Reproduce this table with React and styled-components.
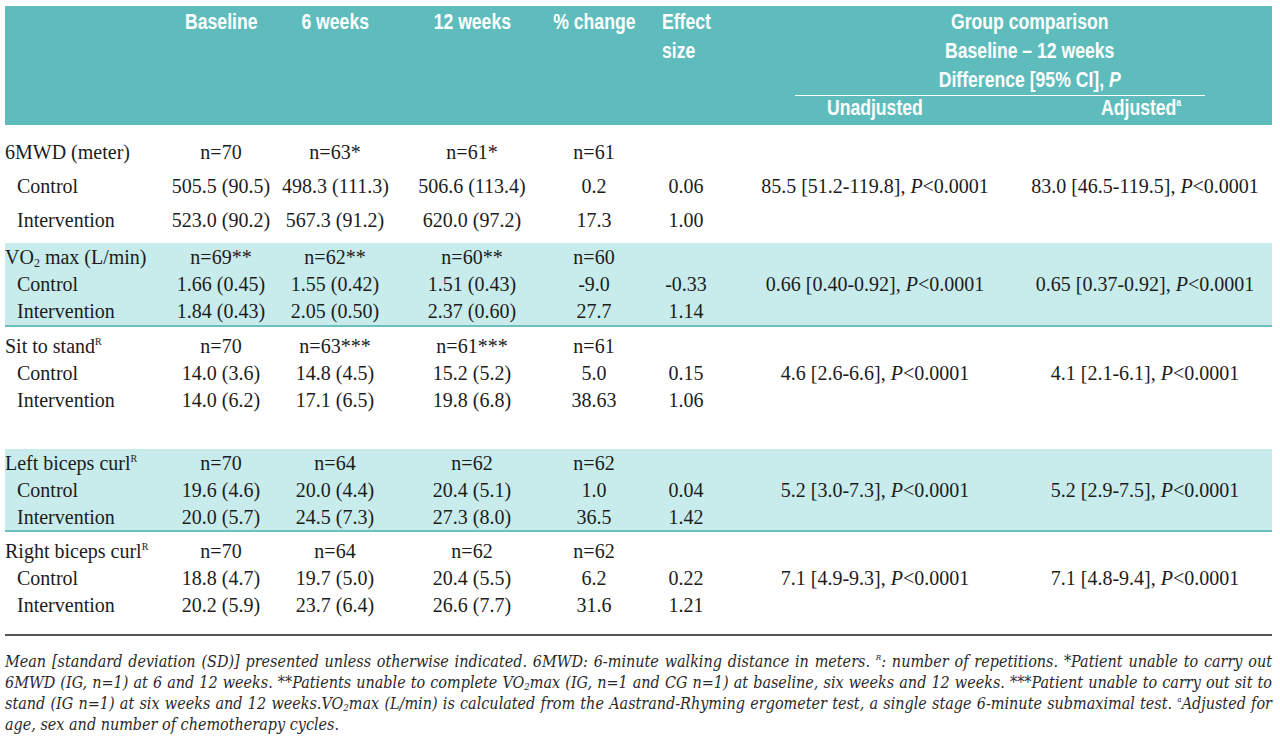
import React from "react";
import styled, { createGlobalStyle } from "styled-components";

const GlobalStyle = createGlobalStyle`
  html, body {
    margin: 0;
    padding: 0;
    background: #ffffff;
  }
  body {
    font-family: "Liberation Serif", "Times New Roman", serif;
    color: #1c1c1c;
  }
`;

const COLS = "155px 122px 106px 168px 76px 108px 270px 262px";

const Page = styled.div`
  width: 1267px;
  padding: 6px 8px 0 5px;
`;

const Head = styled.div`
  display: grid;
  grid-template-columns: ${COLS};
  height: 119px;
  background: #5ebdbc;
  color: #ffffff;
  font-family: "Liberation Sans", Arial, sans-serif;
  font-weight: 700;
  font-size: 22px;
  line-height: 29px;
  white-space: nowrap;
`;

const HeadCell = styled.div`
  display: flex;
  align-items: flex-start;
  justify-content: ${(p) => (p.$left ? "flex-start" : "center")};
  padding-top: 1px;
  padding-left: ${(p) => p.$indent || 0}px;
`;

// the reference uses a condensed grotesque; squeeze Liberation Sans to match
const Narrow = styled.span`
  display: inline-block;
  text-align: ${(p) => (p.$left ? "left" : "center")};
  transform: scaleX(0.8);
  transform-origin: ${(p) => (p.$left ? "left" : "center")} center;
`;

const GroupHead = styled.div`
  grid-column: span 2;
  display: flex;
  flex-direction: column;
`;

const GroupTitle = styled.div`
  padding: 1px 0 0 48px;
  text-align: center;
`;

const Rule = styled.div`
  height: 1px;
  background: #ffffff;
  margin: 1px 67px 0 55px;
`;

const SubHeads = styled.div`
  display: grid;
  grid-template-columns: 270px 262px;
  line-height: 24px;
  text-align: center;
`;

const Section = styled.div`
  display: grid;
  grid-template-columns: ${COLS};
  grid-auto-rows: ${(p) => p.$row}px;
  align-items: center;
  padding: ${(p) => p.$pad};
  background: ${(p) => (p.$shaded ? "#c8ebeb" : "transparent")};
  border-bottom: ${(p) => (p.$shaded ? "2px solid #6cbfbf" : "none")};
  font-size: 20px;
  line-height: 24px;
`;

const Label = styled.div`
  padding-left: ${(p) => (p.$sub ? 12 : 0)}px;
  white-space: nowrap;
`;

const Cell = styled.div`
  text-align: center;
  white-space: nowrap;
  padding-left: ${(p) => p.$shift || 0}px;
`;

const Sup = styled.sup`
  font-size: 0.5em;
  line-height: 0;
  vertical-align: 0.85em;
`;

const Sub = styled.sub`
  font-size: 0.6em;
  line-height: 0;
  vertical-align: -0.25em;
`;

const Notes = styled.div`
  border-top: 2px solid #555555;
  padding-top: 15px;
  font-family: "DejaVu Serif", "Liberation Serif", serif;
  font-stretch: condensed;
  font-style: italic;
  font-size: 16px;
  line-height: 21px;
  color: #2a2a2a;
`;

const NoteLine = styled.div`
  text-align: ${(p) => (p.$last ? "left" : "justify")};
  text-align-last: ${(p) => (p.$last ? "left" : "justify")};
`;

const groups = [
  {
    label: "6MWD (meter)",
    n: ["n=70", "n=63*", "n=61*", "n=61"],
    control: ["505.5 (90.5)", "498.3 (111.3)", "506.6 (113.4)", "0.2", "0.06"],
    intervention: ["523.0 (90.2)", "567.3 (91.2)", "620.0 (97.2)", "17.3", "1.00"],
    unadj: "85.5 [51.2-119.8]",
    adj: "83.0 [46.5-119.5]",
    row: 34,
    pad: "10px 0 6px",
  },
  {
    label: (
      <>
        VO<Sub>2</Sub> max (L/min)
      </>
    ),
    n: ["n=69**", "n=62**", "n=60**", "n=60"],
    control: ["1.66 (0.45)", "1.55 (0.42)", "1.51 (0.43)", "-9.0", "-0.33"],
    intervention: ["1.84 (0.43)", "2.05 (0.50)", "2.37 (0.60)", "27.7", "1.14"],
    unadj: "0.66 [0.40-0.92]",
    adj: "0.65 [0.37-0.92]",
    row: 27,
    pad: "0 0 1px",
    shaded: true,
  },
  {
    label: (
      <>
        Sit to stand<Sup>R</Sup>
      </>
    ),
    n: ["n=70", "n=63***", "n=61***", "n=61"],
    control: ["14.0 (3.6)", "14.8 (4.5)", "15.2 (5.2)", "5.0", "0.15"],
    intervention: ["14.0 (6.2)", "17.1 (6.5)", "19.8 (6.8)", "38.63", "1.06"],
    unadj: "4.6 [2.6-6.6]",
    adj: "4.1 [2.1-6.1]",
    row: 27,
    pad: "5px 0 36px",
  },
  {
    label: (
      <>
        Left biceps curl<Sup>R</Sup>
      </>
    ),
    n: ["n=70", "n=64", "n=62", "n=62"],
    control: ["19.6 (4.6)", "20.0 (4.4)", "20.4 (5.1)", "1.0", "0.04"],
    intervention: ["20.0 (5.7)", "24.5 (7.3)", "27.3 (8.0)", "36.5", "1.42"],
    unadj: "5.2 [3.0-7.3]",
    adj: "5.2 [2.9-7.5]",
    row: 27,
    pad: "0",
    shaded: true,
  },
  {
    label: (
      <>
        Right biceps curl<Sup>R</Sup>
      </>
    ),
    n: ["n=70", "n=64", "n=62", "n=62"],
    control: ["18.8 (4.7)", "19.7 (5.0)", "20.4 (5.5)", "6.2", "0.22"],
    intervention: ["20.2 (5.9)", "23.7 (6.4)", "26.6 (7.7)", "31.6", "1.21"],
    unadj: "7.1 [4.9-9.3]",
    adj: "7.1 [4.8-9.4]",
    row: 27,
    pad: "5px 0 16px",
  },
];

const Compare = ({ value }) => (
  <>
    {value}, <i>P</i>&lt;0.0001
  </>
);

const Group = ({ g }) => (
  <Section $row={g.row} $pad={g.pad} $shaded={g.shaded}>
    <Label>{g.label}</Label>
    {g.n.map((v, i) => (
      <Cell key={i}>{v}</Cell>
    ))}
    <Cell />
    <Cell />
    <Cell />

    <Label $sub>Control</Label>
    {g.control.map((v, i) => (
      <Cell key={i}>{v}</Cell>
    ))}
    <Cell>
      <Compare value={g.unadj} />
    </Cell>
    <Cell $shift={8}>
      <Compare value={g.adj} />
    </Cell>

    <Label $sub>Intervention</Label>
    {g.intervention.map((v, i) => (
      <Cell key={i}>{v}</Cell>
    ))}
    <Cell />
    <Cell />
  </Section>
);

export default function App() {
  return (
    <Page>
      <GlobalStyle />
      <Head>
        <HeadCell />
        <HeadCell>
          <Narrow>Baseline</Narrow>
        </HeadCell>
        <HeadCell>
          <Narrow>6 weeks</Narrow>
        </HeadCell>
        <HeadCell>
          <Narrow>12 weeks</Narrow>
        </HeadCell>
        <HeadCell>
          <Narrow>% change</Narrow>
        </HeadCell>
        <HeadCell $left $indent={30}>
          <Narrow $left>
            Effect
            <br />
            size
          </Narrow>
        </HeadCell>
        <GroupHead>
          <GroupTitle>
            <Narrow>
              Group comparison
              <br />
              Baseline – 12 weeks
              <br />
              Difference [95% CI], <i>P</i>
            </Narrow>
          </GroupTitle>
          <Rule />
          <SubHeads>
            <div>
              <Narrow>Unadjusted</Narrow>
            </div>
            <div>
              <Narrow>
                Adjusted<Sup>a</Sup>
              </Narrow>
            </div>
          </SubHeads>
        </GroupHead>
      </Head>

      {groups.map((g, i) => (
        <Group key={i} g={g} />
      ))}

      <Notes>
        <NoteLine>
          Mean [standard deviation (SD)] presented unless otherwise indicated. 6MWD: 6-minute walking
          distance in meters. <Sup>R</Sup>: number of repetitions. *Patient unable to carry out
        </NoteLine>
        <NoteLine>
          6MWD (IG, n=1) at 6 and 12 weeks. **Patients unable to complete VO<Sub>2</Sub>max (IG, n=1 and
          CG n=1) at baseline, six weeks and 12 weeks. ***Patient unable to carry out sit to
        </NoteLine>
        <NoteLine>
          stand (IG n=1) at six weeks and 12 weeks.VO<Sub>2</Sub>max (L/min) is calculated from the
          Aastrand-Rhyming ergometer test, a single stage 6-minute submaximal test. <Sup>a</Sup>Adjusted for
        </NoteLine>
        <NoteLine $last>age, sex and number of chemotherapy cycles.</NoteLine>
      </Notes>
    </Page>
  );
}
